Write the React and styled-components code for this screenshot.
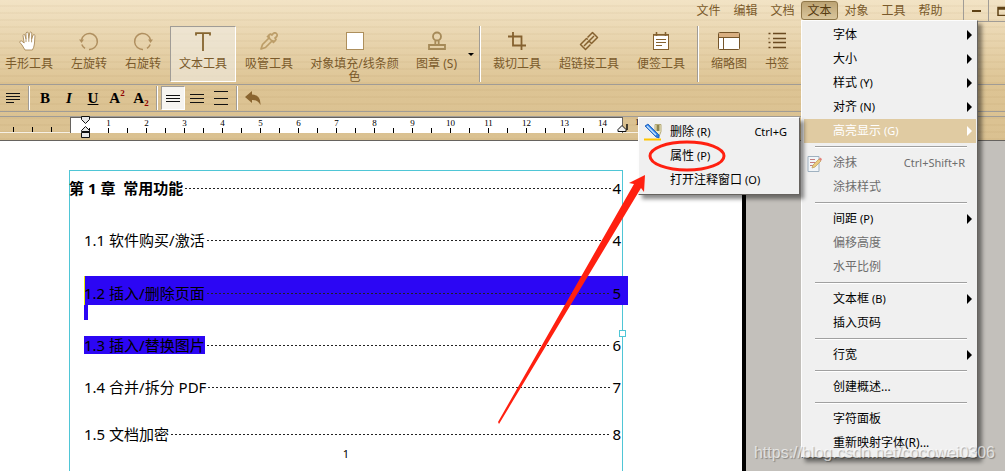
import React from 'react';
import styled, { createGlobalStyle, css } from 'styled-components';

const brown = '#7A5A2B';
const line = '#A09C96';

const menus = ['文件', '编辑', '文档', '文本', '对象', '工具', '帮助'];

const textMenu = [
  { label: '字体', more: true },
  { label: '大小', more: true },
  { label: '样式', hotkey: '(Y)', more: true },
  { label: '对齐', hotkey: '(N)', more: true },
  { label: '高亮显示', hotkey: '(G)', more: true, open: true },
  null,
  { label: '涂抹', shortcut: 'Ctrl+Shift+R', disabled: true, icon: 'redact' },
  { label: '涂抹样式', disabled: true },
  null,
  { label: '间距', hotkey: '(P)', more: true },
  { label: '偏移高度', disabled: true },
  { label: '水平比例', disabled: true },
  null,
  { label: '文本框', hotkey: '(B)', more: true },
  { label: '插入页码' },
  null,
  { label: '行宽', more: true },
  null,
  { label: '创建概述...' },
  null,
  { label: '字符面板' },
  { label: '重新映射字体(R)...' },
];

const highlightMenu = [
  { label: '删除', hotkey: '(R)', shortcut: 'Ctrl+G', icon: 'marker' },
  { label: '属性', hotkey: '(P)' },
  { label: '打开注释窗口', hotkey: '(O)' },
];

const icons = {
  hand: (
    <path
      d="M6 19 L3 14 L0.7 11.2 Q1 9.6 2.6 10 L5.2 12 L4 4.6 Q4.3 3 5.8 3.7 L7 8 L7 2 Q7.8 0.3 9.2 1.5 L9.8 7.6 L10.8 1.6 Q11.8 0.2 12.8 1.8 L12.6 8.3 L14 4 Q15.2 2.8 16 4.4 L15.4 13 Q15 16.4 13.4 19 Z M7 8v3 M9.8 7.6v3.2 M12.6 8.3v3"
      fill="#fff"
      stroke="#A98A5A"
      strokeWidth="0.9"
      strokeLinejoin="round"
    />
  ),
  left: (
    <g opacity="0.7">
      <path d="M2.5 9 A8 8 0 1 1 10 18.5 M2.8 13.5 A8 8 0 0 0 6 17.3" fill="none" stroke="#9A7440" strokeWidth="1.5" />
      <path d="M0 8.5 H5 L2.5 12 Z" fill="#9A7440" />
    </g>
  ),
  right: (
    <g opacity="0.7">
      <path d="M17.5 9 A8 8 0 1 0 10 18.5 M17.2 13.5 A8 8 0 0 1 14 17.3" fill="none" stroke="#9A7440" strokeWidth="1.5" />
      <path d="M15 8.5 H20 L17.5 12 Z" fill="#9A7440" />
    </g>
  ),
  text: <path d="M3 4.5 V2.2 H17 V4.5 M10 2.2 V20" fill="none" stroke="#85642F" strokeWidth="1.8" />,
  dropper: (
    <g fill="none" stroke="#BC9D68" strokeWidth="1.7" strokeLinejoin="round">
      <path d="M10 7 L3.500 13.500 L2 18 L6.500 16.500 L13 10" />
      <path d="M8 5 L15 12 M10.500 7 L9.500 4.500 L11.500 3 L13 4 Q15.500 0.500 17.500 2.500 Q19.500 4.500 16 7 L17 8.500 L15.500 10.500 L13 9.500" />
    </g>
  ),
  fill: <rect x="1.5" y="1.5" width="17" height="17" fill="#fff" stroke="#AD8F5C" />,
  stamp: (
    <g fill="none" stroke="#A68A58" strokeWidth="1.8">
      <circle cx="10" cy="5.5" r="4" />
      <path d="M8.3 9.5 V13.5 M11.7 9.5 V13.5 M2 14 H18 V18 H2 Z" />
    </g>
  ),
  crop: <path d="M6 1 V14.5 H19 M1 5.5 H14.5 V19" fill="none" stroke="#85612F" strokeWidth="1.8" />,
  link: (
    <g fill="none" stroke="#85612F" strokeWidth="1.5" strokeLinejoin="round">
      <path d="M8.500 6.500 L13.500 1.500 L18.500 6.500 L12.500 12.500 L10.500 10.500 M15 5 L9 11" />
      <path d="M9 8.500 L7.500 7.500 L1.500 13.500 L6.500 18.500 L11.500 13.500 M5 15 L10 10" />
    </g>
  ),
  note: (
    <g stroke="#85612F" fill="none">
      <rect x="2.5" y="3.5" width="15" height="15" fill="#fff" />
      <path d="M2.5 4 H17.5 M5.5 1 V5 M14.5 1 V5" strokeWidth="1.5" />
      <path d="M5 8.5 H15 M5 11.5 H15 M5 14.5 H11" />
    </g>
  ),
  thumbs: (
    <g stroke="#75552A">
      <rect x="-0.5" y="1.5" width="21" height="17" rx="1" fill="#fff" />
      <rect x="0" y="2" width="20" height="4.5" fill="#D8AE80" stroke="none" />
      <path d="M0 6.5 H20 M4.5 7 V18" />
    </g>
  ),
  marks: (
    <path
      d="M1.5 2.5 h2 M6 2.5 h13 M1.5 7.5 h1 M6 7.5 h13 M1.5 11.5 h2 M6 11.5 h13 M1.5 16.5 h2 M6 16.5 h13"
      stroke="#6A4A20"
      strokeWidth="1.4"
    />
  ),
};

const tools = [
  { label: '手形工具', icon: 'hand' },
  { label: '左旋转', icon: 'left' },
  { label: '右旋转', icon: 'right' },
  { label: '文本工具', icon: 'text', active: true },
  { label: '吸管工具', icon: 'dropper' },
  { label: '对象填充/线条颜色', icon: 'fill', wide: true },
  { label: '图章 (S)', icon: 'stamp', caret: true },
  null,
  { label: '裁切工具', icon: 'crop' },
  { label: '超链接工具', icon: 'link' },
  { label: '便签工具', icon: 'note' },
  null,
  { label: '缩略图', icon: 'thumbs' },
  { label: '书签', icon: 'marks' },
];

const MenuIcon = ({ name }) =>
  name === 'marker' ? (
    <svg width="20" height="18" viewBox="0 0 20 18">
      <path d="M11 1.500h6v7l-2 5h-2l-2-5z" fill="#EFE9C4" stroke="#B5AA78" />
      <path d="M14 2v6" stroke="#8E844F" strokeWidth="3" />
      <path d="M1 3l3-2 11 11v3l-3-1z" fill="#2F80E6" stroke="#1458B8" strokeWidth="0.800" />
      <path d="M3 3l9 9" stroke="#BFE1FF" strokeWidth="1.500" />
      <path d="M0 16.500h17" stroke="#FFC400" strokeWidth="2" />
    </svg>
  ) : (
    <svg width="16" height="17" viewBox="0 0 16 17">
      <path d="M1 1.5h11v15H1z" fill="#F1F5F8" stroke="#9FB1C0" />
      <path d="M3 4.5h5M3 7.5h5M3 10.5h4" stroke="#C47E7E" />
      <path d="M5 13l1-3 6-6 2 2-6 6z" fill="#EBCB7E" stroke="#C0A566" strokeWidth="0.800" />
      <path d="M12 4l1-1.500 2 1.500-1 2z" fill="#E48078" />
    </svg>
  );

const MenuRows = ({ items }) =>
  items.map((item, i) =>
    item ? (
      <MenuRow key={item.label} role="none">
        <MenuButton role="menuitem" disabled={item.disabled} $open={item.open}>
          <IconSlot>{item.icon && <MenuIcon name={item.icon} />}</IconSlot>
          <span>{item.label}</span>
          {item.hotkey && <Hotkey>{item.hotkey}</Hotkey>}
          {item.shortcut && <Shortcut>{item.shortcut}</Shortcut>}
          {item.more && <More />}
        </MenuButton>
        {item.open && (
          <SubMenu role="menu">
            <MenuRows items={highlightMenu} />
          </SubMenu>
        )}
      </MenuRow>
    ) : (
      <MenuLine key={i} role="separator" />
    )
  );

const Cells = ({ count, from }) =>
  Array.from({ length: count }, (_, i) => (
    <Cell key={i}>{from !== undefined && i % 2 === 1 ? from + (i - 1) / 2 : ''}</Cell>
  ));

const App = () => {
  return (
    <Window>
      <GlobalStyle />
      <Chrome>
        <MenuBar>
          {menus.map((name) => (
            <MenuTab key={name}>
              <TabButton $open={name === '文本'}>{name}</TabButton>
              {name === '文本' && (
                <DropMenu role="menu">
                  <MenuRows items={textMenu} />
                </DropMenu>
              )}
            </MenuTab>
          ))}
          <WindowButtons>
            <WindowButton aria-label="最小化">
              <svg width="10" height="10"><path d="M0 5h9" stroke="#5E4115" strokeWidth="2" /></svg>
            </WindowButton>
            <WindowButton aria-label="还原">
              <svg width="12" height="10"><path d="M1 1.500h10v8H1z M1 3h10" fill="none" stroke="#5E4115" strokeWidth="1.500" /></svg>
            </WindowButton>
          </WindowButtons>
        </MenuBar>

        <ToolBar>
          {tools.map((tool, i) =>
            tool ? (
              <React.Fragment key={tool.label}>
                <Tool $active={tool.active} $wide={tool.wide}>
                  <svg width="20" height="20" overflow="visible">{icons[tool.icon]}</svg>
                  {tool.label}
                </Tool>
                {tool.caret && <Caret aria-label="更多图章" />}
              </React.Fragment>
            ) : (
              <Divider key={i} />
            )
          )}
        </ToolBar>

        <FormatBar>
          <FormatButton aria-label="对齐">
            <svg width="14" height="12"><path d="M0 1.5h14M0 4.5h14M0 7.5h14M0 10.5h8" stroke="#111" /></svg>
          </FormatButton>
          <Divider />
          <FormatButton aria-label="粗体">B</FormatButton>
          <FormatButton aria-label="斜体"><i>I</i></FormatButton>
          <FormatButton aria-label="下划线"><u>U</u></FormatButton>
          <FormatButton aria-label="上标">A<Script $top>2</Script></FormatButton>
          <FormatButton aria-label="下标">A<Script>2</Script></FormatButton>
          <Divider />
          <FormatButton aria-label="单倍行距" $active>
            <svg width="14" height="14"><path d="M0 4.5h14M0 7.5h14M0 10.5h14" stroke="#111" /></svg>
          </FormatButton>
          <FormatButton aria-label="1.5 倍行距">
            <svg width="14" height="14"><path d="M0 3.500h14M0 7.500h14M0 11.500h14" stroke="#111" /></svg>
          </FormatButton>
          <FormatButton aria-label="双倍行距">
            <svg width="14" height="14"><path d="M0 0.500h14M0 7.500h14M0 13.500h14" stroke="#111" /></svg>
          </FormatButton>
          <Divider />
          <FormatButton aria-label="撤销">
            <svg width="16" height="14">
              <path d="M0 6 L7 0 V3.500 Q16 4 15.500 14 Q12.500 8.500 7 9 V12 Z" fill="#8A6530" />
            </svg>
          </FormatButton>
        </FormatBar>

        <Ruler>
          <Gutter><Cells count={3} /></Gutter>
          <Scale>
            <Cells count={28} from={1} />
            <IndentMark width="11" height="24" viewBox="0 0 11 24">
              <path d="M1.5 1.5h8v3l-4 4-4-4z M5.500 11.500l4 4v1h-8v-1z M1.500 17.500h8v5h-8z" fill="#E8E8E8" stroke="#111" />
            </IndentMark>
            <EndMark width="13" height="10" viewBox="0 0 13 10">
              <path d="M1 6.500l4-4 4 4v2h-8z" fill="#F2F2F2" stroke="#111" />
              <path d="M10 1v6" stroke="#111" strokeWidth="1.500" />
            </EndMark>
          </Scale>
          <Gutter $end><Cell>15</Cell></Gutter>
        </Ruler>
      </Chrome>

      <Desk>
        <Page>
          <Frame>
            <Handle />
            <Row $bold><span>第 1 章&nbsp; 常用功能</span><Dots /><span>4</span></Row>
            <Row $indent $gap={34}><span>1.1 软件购买/激活</span><Dots /><span>4</span></Row>
            <Row $indent $selected $gap={27}><span>1.2 插入/删除页面</span><Dots /><span>5</span></Row>
            <LineEnd />
            <Row $indent $gap={16}><Selection>1.3 插入/替换图片</Selection><Dots /><span>6</span></Row>
            <Row $indent $gap={24}><span>1.4 合并/拆分 PDF</span><Dots /><span>7</span></Row>
            <Row $indent $gap={29}><span>1.5 文档加密</span><Dots /><span>8</span></Row>
            <PageNumber>1</PageNumber>
          </Frame>
        </Page>
      </Desk>

      <Marks width="240" height="290" viewBox="490 140 240 290">
        <ellipse cx="687" cy="156" rx="37" ry="14" fill="none" stroke="#FF2010" strokeWidth="3" />
        <path d="M498 422 L634 184 L629 183 L645 175 L644 192 L641 188 L499 424 Z" fill="#FF2010" />
      </Marks>
      <Watermark>https://blog.csdn.net/cocowei0306</Watermark>
    </Window>
  );
};

const GlobalStyle = createGlobalStyle`
  body {
    margin: 0;
  }
  * {
    box-sizing: border-box;
  }
  button {
    margin: 0;
    padding: 0;
    border: none;
    background: none;
    color: inherit;
    font: inherit;
  }
`;

const Window = styled.div`
  position: relative;
  display: flex;
  flex-direction: column;
  height: 100vh;
  overflow: hidden;
  background: #C3C0BB;
  font-family: 'Noto Sans', 'Noto Sans CJK SC', sans-serif;
  font-size: 12px;
  line-height: 16px;
`;

const Chrome = styled.header`
  flex: none;
  border-bottom: 1px solid #66635F;
  color: ${brown};
  background:
    repeating-linear-gradient(rgba(120, 80, 20, 0) 0 5px, rgba(120, 80, 20, 0.04) 5px 7px),
    linear-gradient(#F2E3C5, #DDC494 84px, #DAC191);
`;

const MenuBar = styled.nav`
  display: flex;
  justify-content: flex-end;
  height: 22px;
`;

const MenuTab = styled.div`
  position: relative;
  padding-top: 1px;
`;

const TabButton = styled.button`
  display: block;
  width: 37px;
  height: 19px;
  line-height: 17px;
  border: 1px solid transparent;
  border-radius: 3px;
  ${(props) =>
    props.$open &&
    css`
      border-color: #8F7749;
      background: linear-gradient(#BCA373, #D9C69D);
      color: #553A10;
    `}
`;

const WindowButtons = styled.div`
  display: flex;
  width: 42px;
  margin-left: 14px;
  overflow: hidden;
`;

const WindowButton = styled.button`
  flex: none;
  display: flex;
  align-items: center;
  width: 25px;
  padding-left: 8px;
  border-left: 1px solid ${line};
  border-bottom: 1px solid ${line};
`;

const ToolBar = styled.div`
  display: flex;
  height: 63px;
  margin-left: -4px;
  padding: 4px 0 2px;
  border-bottom: 1px solid ${line};
`;

const Tool = styled.button`
  display: flex;
  flex: none;
  flex-direction: column;
  align-items: center;
  width: ${(props) => (props.$wide ? '105px' : 'auto')};
  padding: 5px 8px 0 9px;
  padding: ${(props) => (props.$wide ? '5px 8px 0' : '5px 9px 0')};
  line-height: 13px;
  svg {
    flex: none;
    margin-bottom: 6px;
  }
  ${(props) =>
    props.$active &&
    css`
      padding: 4px 8px 0;
      border: 1px solid;
      border-color: ${line} #fff #fff ${line};
      background: rgba(240, 236, 228, 0.6);
    `}
`;

const Caret = styled.button`
  width: 10px;
  &::after {
    content: '';
    display: block;
    width: 0;
    margin: 0 auto;
    border: 3px solid transparent;
    border-top-color: #000;
    border-bottom: none;
  }
`;

const Divider = styled.div`
  flex: none;
  width: 2px;
  margin: 0 3px;
  border-left: 1px solid ${line};
  border-right: 1px solid #fff;
`;

const FormatBar = styled.div`
  display: flex;
  height: 27px;
  padding: 1px 0 1px 1px;
  border-bottom: 1px solid ${line};
`;

const FormatButton = styled.button`
  position: relative;
  display: flex;
  align-items: center;
  justify-content: center;
  width: 24px;
  color: #000;
  font-family: 'Liberation Serif', serif;
  font-size: 15px;
  font-weight: bold;
  ${(props) =>
    props.$active &&
    css`
      border: 1px solid;
      border-color: ${line} #fff #fff ${line};
      background: #F6F4F0;
    `}
`;

const Script = styled.span`
  align-self: ${(props) => (props.$top ? 'flex-start' : 'flex-end')};
  color: #8E0000;
  font-size: 9px;
  line-height: 14px;
`;

const Ruler = styled.div`
  display: flex;
  height: 24px;
  margin-top: 4px;
  padding-bottom: 7px;
  border-top: 1px solid ${line};
`;

const Gutter = styled.div`
  display: flex;
  flex: ${(props) => (props.$end ? '0 0 119px' : '0 0 70px')};
  padding: 1px 0 0 ${(props) => (props.$end ? '7px' : '4px')};
  border-bottom: 1px solid #F6F0E4;
`;

const Scale = styled.div`
  position: relative;
  display: flex;
  flex: 0 0 553px;
  padding-left: 9px;
  border: 1px solid #66635F;
  border-width: 1px 1px 0;
  background: #fff;
`;

const Cell = styled.div`
  display: flex;
  flex: none;
  flex-direction: column;
  align-items: center;
  justify-content: flex-end;
  width: 19px;
  color: #000;
  font-family: 'Liberation Serif', serif;
  font-size: 9px;
  line-height: 8px;
  &::after {
    content: '';
    width: 1px;
    height: 5px;
    margin-top: 1px;
    background: #000;
  }
`;

const IndentMark = styled.svg`
  position: absolute;
  top: -3px;
  left: 9px;
`;

const EndMark = styled.svg`
  position: absolute;
  right: -8px;
  bottom: 0;
`;

const Desk = styled.main`
  display: flex;
  flex: 1;
  padding-right: 259px;
`;

const Page = styled.div`
  flex: 1;
  padding: 29px 115px 0 69px;
  border-right: 4px solid #000;
  background: #fff;
`;

const Frame = styled.div`
  position: relative;
  height: 100%;
  margin-right: 4px;
  padding-top: 8px;
  border: 1px solid #4FC6D6;
  border-bottom: none;
  color: #000;
  font-size: 15px;
  line-height: 18px;
`;

const Row = styled.div`
  display: flex;
  align-items: center;
  margin-top: ${(props) => props.$gap || 0}px;
  margin-left: ${(props) => (props.$indent ? '14px' : '-1px')};
  padding-right: 1px;
  span:first-child {
    font-weight: ${(props) => (props.$bold ? 'bold' : 'normal')};
  }
  ${(props) =>
    props.$selected &&
    css`
      margin-right: -6px;
      padding: 8px 7px 3px 0;
      background: #2C06F4;
      box-shadow: inset 1px 0 #E8F000;
    `}
`;

const Dots = styled.i`
  flex: 1;
  height: 1px;
  margin: 0 1px 0 2px;
  background: repeating-linear-gradient(90deg, #222 0 2px, transparent 2px 4px);
`;

const LineEnd = styled.div`
  width: 4px;
  height: 15px;
  margin-left: 14px;
  background: #2C06F4;
`;

const Selection = styled.span`
  background: #2C06F4;
`;

const PageNumber = styled.div`
  margin-top: 3px;
  font-size: 11px;
  line-height: 16px;
  text-align: center;
`;

const Handle = styled.div`
  position: absolute;
  top: 159px;
  right: -4px;
  width: 7px;
  height: 7px;
  border: 1px solid #4FC6D6;
  background: #fff;
`;

const DropMenu = styled.ul`
  position: absolute;
  z-index: 1;
  top: 20px;
  left: 0;
  width: 177px;
  margin: 0;
  padding: 2px 1px 2px 2px;
  list-style: none;
  border: 1px solid;
  border-color: #FDFDFD #66635F #66635F #FDFDFD;
  background: #F0F0F0;
  box-shadow: 4px 4px 4px rgba(0, 0, 0, 0.45);
  color: #000;
`;

const SubMenu = styled(DropMenu)`
  top: -2px;
  right: 100%;
  left: auto;
  width: 162px;
  margin-right: 4px;
`;

const MenuRow = styled.li`
  position: relative;
`;

const MenuButton = styled.button`
  display: flex;
  align-items: center;
  width: 100%;
  height: 24px;
  padding-right: 4px;
  text-align: left;
  white-space: nowrap;
  &:disabled {
    color: #6D6D6D;
  }
  ${(props) =>
    props.$open &&
    css`
      background: #E0CBA2;
      color: #fff;
    `}
`;

const IconSlot = styled.span`
  display: flex;
  flex: none;
  width: 29px;
  padding-left: 3px;
`;

const Hotkey = styled.span`
  margin-left: 3px;
  font-size: 11px;
`;

const Shortcut = styled.span`
  margin-left: auto;
  padding-right: 7px;
  font-size: 11px;
`;

const More = styled.span`
  width: 5px;
  margin-left: auto;
  border: 5px solid transparent;
  border-left-color: currentColor;
  border-right: none;
`;

const MenuLine = styled.li`
  height: 2px;
  margin: 3px 9px 3px 11px;
  border-top: 1px solid #A0A0A0;
  border-bottom: 1px solid #fff;
`;

const Marks = styled.svg`
  position: absolute;
  z-index: 2;
  top: 140px;
  left: 490px;
  pointer-events: none;
`;

const Watermark = styled.div`
  position: absolute;
  z-index: 2;
  right: 10px;
  bottom: 9px;
  color: rgba(255, 255, 255, 0.65);
  font-family: 'Liberation Sans', sans-serif;
  font-size: 16px;
  line-height: 18px;
  text-shadow: 1px 1px 1px rgba(0, 0, 0, 0.3);
`;

export default App;
